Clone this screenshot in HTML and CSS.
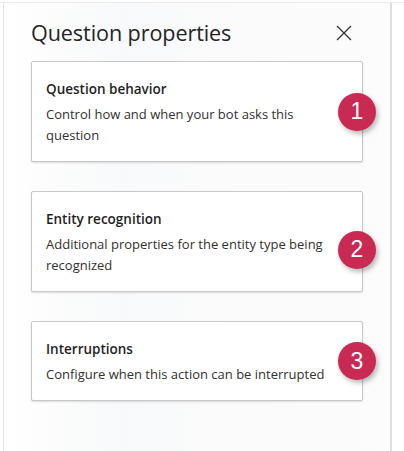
FILE: index.html
```html
<!DOCTYPE html>
<html>
<head>
<meta charset="utf-8">
<link rel="stylesheet" href="styles.css">
</head>
<body>
<div class="page">
  <div class="panel">
    <div class="header">
      <h1 class="title">Question properties</h1>
      <button class="close" aria-label="Close">
        <svg width="16" height="16" viewBox="0 0 16 16"><path d="M1 1L15 15M15 1L1 15" stroke="#333" stroke-width="1.3" fill="none"/></svg>
      </button>
    </div>
    <div class="cards">
      <div class="card">
        <div class="card-title">Question behavior</div>
        <div class="card-desc">Control how and when your bot asks this question</div>
        <span class="badge">1</span>
      </div>
      <div class="card">
        <div class="card-title">Entity recognition</div>
        <div class="card-desc">Additional properties for the entity type being recognized</div>
        <span class="badge badge-low">2</span>
      </div>
      <div class="card">
        <div class="card-title">Interruptions</div>
        <div class="card-desc">Configure when this action can be interrupted</div>
        <span class="badge">3</span>
      </div>
    </div>
  </div>
</div>
</body>
</html>
```

FILE: styles.css
```css
html, body {
  margin: 0;
  padding: 0;
  background: #ffffff;
  font-family: "Open Sans", "Noto Sans", sans-serif;
  color: #252423;
}

.page {
  margin-top: 2px;
  border-top: 1px solid #ececec;
  height: 448px;
  overflow: hidden;
}

.panel {
  margin-left: 3px;
  height: 100%;
  border-left: 1px solid #e4e4e4;
  border-right: 2px solid #dedede;
  background: linear-gradient(90deg, #ffffff 0%, #f8f9fa 30%, #fbfbfc 60%, #fcfcfd 100%);
  padding: 0 0 0 27px;
  box-sizing: border-box;
  width: 389px;
}

.header {
  display: flex;
  align-items: center;
  justify-content: space-between;
  height: 58px;
  padding-right: 38px;
}

.title {
  margin: 0;
  font-size: 21.6px;
  font-weight: 400;
  color: #242424;
  letter-spacing: -0.1px;
}

.close {
  border: 0;
  background: transparent;
  padding: 0;
  width: 16px;
  height: 16px;
  display: flex;
  margin-top: 1px;
}

.cards {
  display: flex;
  flex-direction: column;
  gap: 29px;
  width: 332px;
}

.card {
  position: relative;
  background: #ffffff;
  border: 1px solid #c8c8c8;
  border-radius: 2px;
  box-shadow: 0 1px 2px rgba(0, 0, 0, 0.14);
  padding: 17px 18px 15px 14px;
}

.card-title {
  font-size: 13.5px;
  font-weight: 600;
  line-height: 20px;
  color: #1f1f1f;
}

.card-desc {
  font-size: 13px;
  line-height: 21px;
  color: #323130;
  margin-top: 5px;
}

.badge {
  position: absolute;
  right: -14px;
  top: 50%;
  transform: translateY(-50%);
  width: 38px;
  height: 38px;
  border-radius: 50%;
  background: #c82a53;
  color: #ffffff;
  font-family: "Liberation Sans", Arial, sans-serif;
  font-size: 23px;
  display: flex;
  align-items: center;
  justify-content: center;
  box-shadow: 2px 3px 5px rgba(0, 0, 0, 0.28);
}

.badge-low {
  margin-top: 8px;
}
```
